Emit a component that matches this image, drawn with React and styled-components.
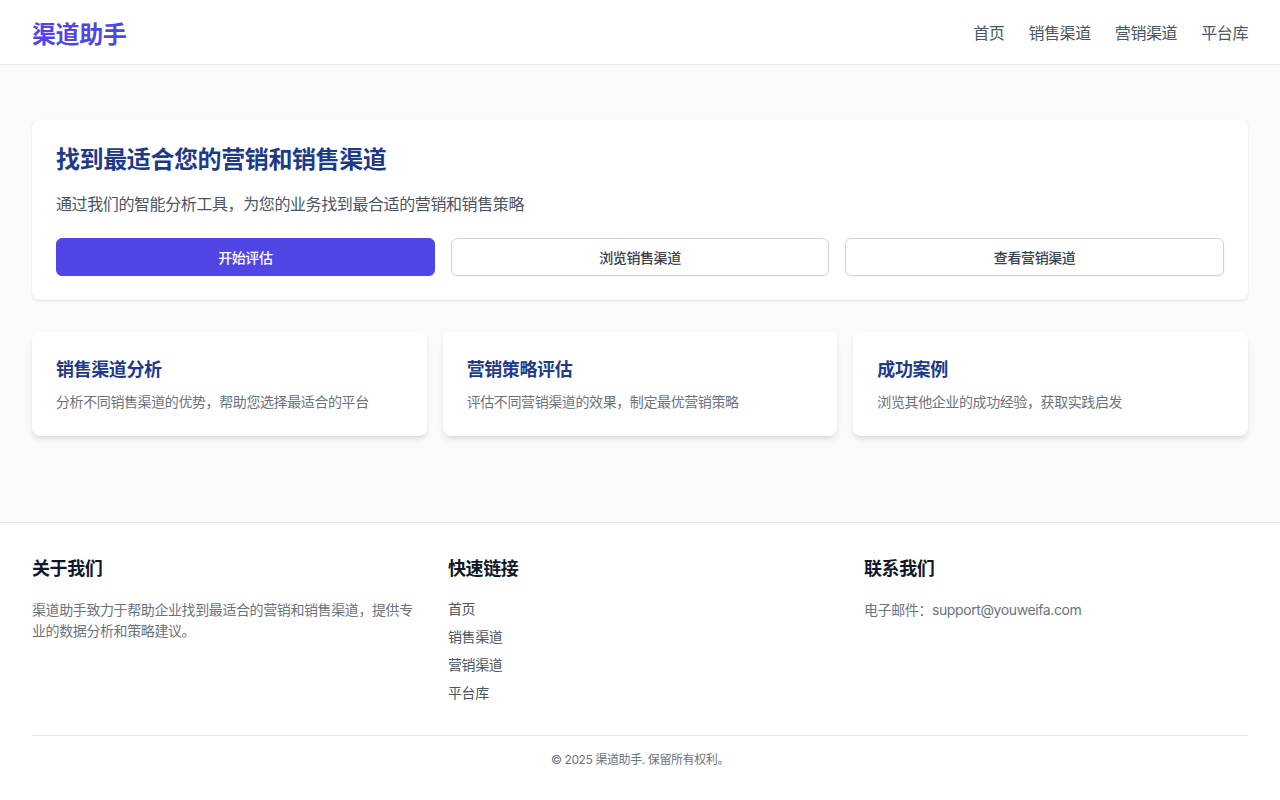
import React from 'react';
import styled, { createGlobalStyle } from 'styled-components';

const GlobalStyle = createGlobalStyle`
  * { box-sizing: border-box; }
  body {
    margin: 0;
    font-family: Inter, "Noto Sans CJK SC", sans-serif;
    letter-spacing: -0.4px;
    background: #fff;
    color: #111827;
  }
`;

const Header = styled.header`
  height: 65px;
  background: #fff;
  border-bottom: 1px solid #e5e7eb;
  display: flex;
  align-items: center;
  justify-content: space-between;
  padding: 0 32px;
`;

const Logo = styled.div`
  font-size: 24px;
  font-weight: 700;
  color: #4f46e5;
`;

const Nav = styled.nav`
  display: flex;
  gap: 24px;
`;

const NavLink = styled.a`
  font-size: 16px;
  color: #4b5563;
  text-decoration: none;
`;

const Main = styled.main`
  background: #f9fafb;
  padding: 55px 32px 86px;
  display: flex;
  flex-direction: column;
  gap: 32px;
`;

const Hero = styled.section`
  background: #fff;
  border-radius: 8px;
  box-shadow: 0 1px 3px rgba(0, 0, 0, 0.08), 0 1px 2px rgba(0, 0, 0, 0.04);
  padding: 24px;
`;

const HeroTitle = styled.h1`
  margin: 0 0 16px;
  font-size: 24px;
  line-height: 32px;
  font-weight: 700;
  color: #1e3a8a;
`;

const HeroText = styled.p`
  margin: 0 0 22px;
  font-size: 16px;
  line-height: 24px;
  color: #4b5563;
`;

const ButtonRow = styled.div`
  display: grid;
  grid-template-columns: repeat(3, 1fr);
  gap: 16px;
`;

const Button = styled.button`
  height: 38px;
  border-radius: 6px;
  font-family: inherit;
  letter-spacing: inherit;
  font-size: 14px;
  font-weight: 500;
  cursor: pointer;
  border: 1px solid ${p => (p.$primary ? '#4f46e5' : '#d1d5db')};
  background: ${p => (p.$primary ? '#4f46e5' : '#fff')};
  color: ${p => (p.$primary ? '#fff' : '#374151')};
  box-shadow: 0 1px 2px rgba(0, 0, 0, 0.05);
`;

const CardGrid = styled.div`
  display: grid;
  grid-template-columns: repeat(3, 1fr);
  gap: 16px;
`;

const Card = styled.div`
  background: #fff;
  border-radius: 8px;
  padding: 24px;
  box-shadow: 0 4px 6px -1px rgba(0, 0, 0, 0.1), 0 2px 4px -2px rgba(0, 0, 0, 0.08);
`;

const CardTitle = styled.h3`
  margin: 0 0 8px;
  font-size: 18px;
  line-height: 28px;
  font-weight: 600;
  color: #1e3a8a;
`;

const CardText = styled.p`
  margin: 0;
  font-size: 14px;
  line-height: 20px;
  color: #6b7280;
`;

const Footer = styled.footer`
  background: #fff;
  border-top: 1px solid #e5e7eb;
  padding: 32px;
`;

const FooterGrid = styled.div`
  display: grid;
  grid-template-columns: repeat(3, 1fr);
  gap: 32px;
`;

const FooterHeading = styled.h4`
  margin: 0 0 16px;
  font-size: 18px;
  line-height: 28px;
  font-weight: 600;
  color: #111827;
`;

const FooterText = styled.p`
  margin: 0;
  font-size: 14px;
  line-height: 21px;
  color: #6b7280;
`;

const LinkList = styled.ul`
  list-style: none;
  margin: 0;
  padding: 0;
  display: flex;
  flex-direction: column;
  gap: 8px;
`;

const LinkItem = styled.li`
  font-size: 14px;
  line-height: 20px;
`;

const FooterLink = styled.a`
  color: #4b5563;
  text-decoration: none;
`;

const Copyright = styled.div`
  margin-top: 32px;
  padding-top: 16px;
  border-top: 1px solid #e5e7eb;
  text-align: center;
  font-size: 12px;
  line-height: 16px;
  color: #6b7280;
`;

const navItems = ['首页', '销售渠道', '营销渠道', '平台库'];

const features = [
  { title: '销售渠道分析', text: '分析不同销售渠道的优势，帮助您选择最适合的平台' },
  { title: '营销策略评估', text: '评估不同营销渠道的效果，制定最优营销策略' },
  { title: '成功案例', text: '浏览其他企业的成功经验，获取实践启发' },
];

const App = () => {
  return (
    <>
      <GlobalStyle />
      <Header>
        <Logo>渠道助手</Logo>
        <Nav>
          {navItems.map(item => (
            <NavLink key={item} href="#">{item}</NavLink>
          ))}
        </Nav>
      </Header>
      <Main>
        <Hero>
          <HeroTitle>找到最适合您的营销和销售渠道</HeroTitle>
          <HeroText>通过我们的智能分析工具，为您的业务找到最合适的营销和销售策略</HeroText>
          <ButtonRow>
            <Button $primary>开始评估</Button>
            <Button>浏览销售渠道</Button>
            <Button>查看营销渠道</Button>
          </ButtonRow>
        </Hero>
        <CardGrid>
          {features.map(f => (
            <Card key={f.title}>
              <CardTitle>{f.title}</CardTitle>
              <CardText>{f.text}</CardText>
            </Card>
          ))}
        </CardGrid>
      </Main>
      <Footer>
        <FooterGrid>
          <div>
            <FooterHeading>关于我们</FooterHeading>
            <FooterText>渠道助手致力于帮助企业找到最适合的营销和销售渠道，提供专业的数据分析和策略建议。</FooterText>
          </div>
          <div>
            <FooterHeading>快速链接</FooterHeading>
            <LinkList>
              {navItems.map(item => (
                <LinkItem key={item}><FooterLink href="#">{item}</FooterLink></LinkItem>
              ))}
            </LinkList>
          </div>
          <div>
            <FooterHeading>联系我们</FooterHeading>
            <FooterText>电子邮件：support@youweifa.com</FooterText>
          </div>
        </FooterGrid>
        <Copyright>© 2025 渠道助手. 保留所有权利。</Copyright>
      </Footer>
    </>
  );
};

export default App;
